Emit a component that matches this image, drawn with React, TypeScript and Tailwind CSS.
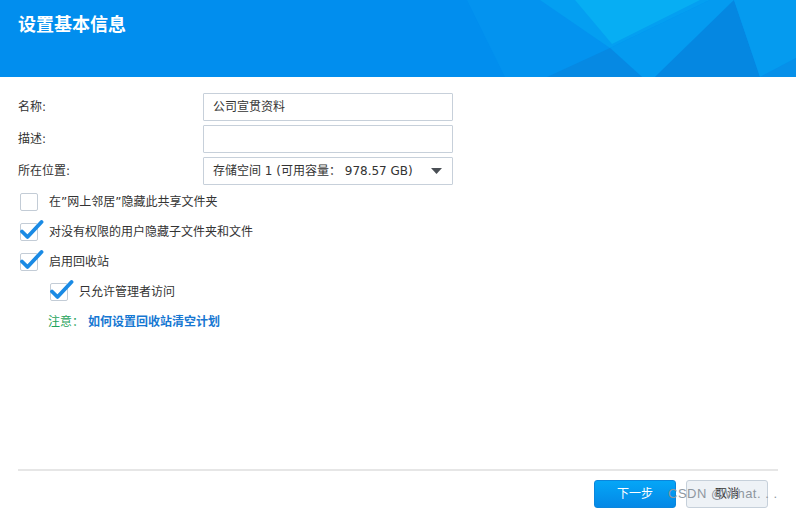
const font = { fontFamily: '"DejaVu Sans", "Noto Sans CJK SC", sans-serif' };

function Check({ checked }: { checked: boolean }) {
  return (
    <span className="relative inline-block h-[18px] w-[18px] shrink-0 rounded-[2px] border border-[#c3ccd6] bg-white">
      {checked && (
        <svg
          className="absolute -left-[1px] -top-[5px]"
          width="24"
          height="22"
          viewBox="0 0 24 22"
        >
          <path
            d="M2 12.5 L7.5 18 L21.5 3"
            fill="none"
            stroke="#1a8ae4"
            strokeWidth="3.8"
            strokeLinecap="round"
            strokeLinejoin="round"
          />
        </svg>
      )}
    </span>
  );
}

function Field({ label, children }: { label: string; children: React.ReactNode }) {
  return (
    <div className="flex h-[28px] items-center">
      <div className="w-[185px] text-[12px] text-[#333]">{label}</div>
      <div className="h-[28px] w-[250px] rounded-[1px] border border-[#c7d0da] bg-white">{children}</div>
    </div>
  );
}

function CheckRow({ label, checked, indent }: { label: string; checked: boolean; indent?: boolean }) {
  return (
    <div className={`flex h-[30px] items-center gap-[11px] ${indent ? "pl-[32px]" : "pl-[2px]"}`}>
      <Check checked={checked} />
      <span className="text-[12px] text-[#333]">{label}</span>
    </div>
  );
}

export default function App() {
  return (
    <div className="relative flex h-[509px] w-[796px] flex-col overflow-hidden bg-white" style={font}>
      <header className="relative h-[77px] shrink-0 overflow-hidden bg-[#018eee]">
        {/* background facets */}
        <svg className="absolute inset-0" width="796" height="77" viewBox="0 0 796 77">
          <polygon points="467,0 796,0 796,77 505,77" fill="#0393ef" />
          <polygon points="540,0 710,0 610,48" fill="#049ff1" />
          <polygon points="575,0 700,0 612,44" fill="#07aef3" />
          <polygon points="610,48 710,0 734,0 655,77 642,77" fill="#049bf0" />
          <polygon points="547,77 610,48 642,77" fill="#0689e3" />
          <polygon points="734,0 655,77 760,77" fill="#0587e1" />
          <polygon points="734,0 796,0 796,58 760,77" fill="#059bef" />
          <polygon points="796,58 760,77 796,77" fill="#0790e9" />
        </svg>
        <h1
          className="relative px-[18px] pt-[10px] text-[18px] font-bold text-white"
          style={{ fontFamily: '"Noto Sans CJK SC", sans-serif' }}
        >
          设置基本信息
        </h1>
      </header>

      <main className="flex-1 px-[18px] pt-[16px]">
        <div className="flex flex-col gap-[4px]">
          <Field label="名称:">
            <div className="px-[9px] text-[12px] leading-[26px] text-[#333]">公司宣贯资料</div>
          </Field>
          <Field label="描述:">
            <div />
          </Field>
          <Field label="所在位置:">
            <div className="flex h-full items-center justify-between pl-[9px] pr-[10px] text-[12px] text-[#333]">
              <span>存储空间 1 (可用容量： 978.57 GB)</span>
              <svg width="11" height="6" viewBox="0 0 11 6">
                <polygon points="0,0 11,0 5.5,6" fill="#4a4f55" />
              </svg>
            </div>
          </Field>
        </div>
        <div className="mt-[2px] flex flex-col">
          <CheckRow label="在”网上邻居”隐藏此共享文件夹" checked={false} />
          <CheckRow label="对没有权限的用户隐藏子文件夹和文件" checked />
          <CheckRow label="启用回收站" checked />
          <CheckRow label="只允许管理者访问" checked indent />
          <div className="flex h-[30px] items-center pl-[30px] text-[12px]">
            <span className="text-[#1fa35c]">注意：</span>
            <span className="ml-[4px] font-bold text-[#1677d2]">如何设置回收站清空计划</span>
          </div>
        </div>
      </main>

      <footer className="mx-[18px] h-[40px] shrink-0 border-t-2 border-[#e6e6e6]">
        <div className="flex justify-end gap-[10px] pr-[10px] pt-[9px]">
          <button className="h-[28px] w-[82px] rounded-[3px] border border-[#0b86dc] bg-gradient-to-b from-[#05a6f7] to-[#0588e6] text-[12px] text-white">
            下一步
          </button>
          <button className="h-[28px] w-[82px] rounded-[3px] border border-[#c6d0da] bg-[#eef2f6] text-[12px] text-[#333]">
            取消
          </button>
        </div>
      </footer>

      <span
        className="absolute left-[668px] top-[484px] text-[13px] tracking-[0.5px] text-[#8e979f]"
        style={{ fontFamily: '"Liberation Sans", "Noto Sans CJK SC", sans-serif' }}
      >
        CSDN @What. . .
      </span>
    </div>
  );
}
